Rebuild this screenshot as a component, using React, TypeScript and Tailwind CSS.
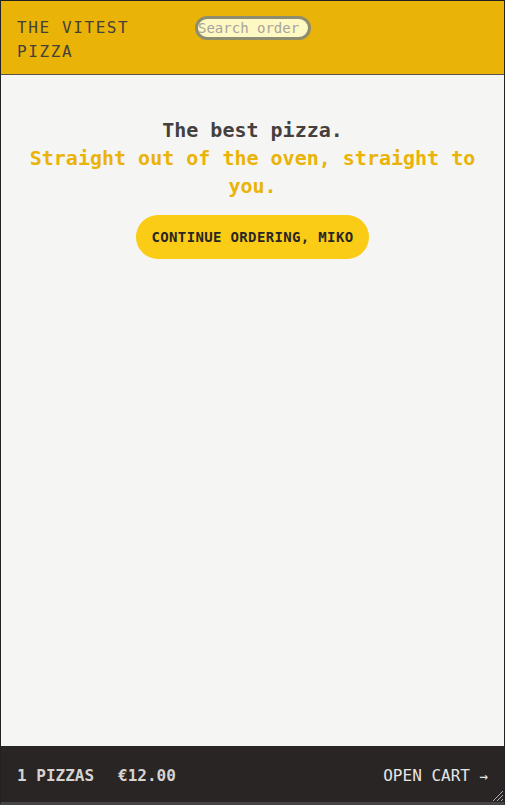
const mono = "font-['DejaVu_Sans_Mono','Liberation_Mono',monospace]";

function Header() {
  return (
    <header className="flex items-start gap-[18px] border-b border-[#57534e] bg-[#eab308] px-4 pt-[15px] pb-[10px]">
      <a href="#" className="w-40 text-base leading-6 tracking-widest text-[#44403c] uppercase">
        The Vitest Pizza
      </a>
      <form>
        <input
          placeholder="Search order #"
          className="h-6 w-[116px] rounded-full border-[3px] border-[#8f8d6f] bg-[#fef9c3] px-0 text-sm text-stone-700 placeholder:text-[#a8a29e] focus:outline-none"
        />
      </form>
    </header>
  );
}

function Home() {
  return (
    <div className="mt-[41px] px-4 text-center">
      <h1 className="mb-[15px] text-xl leading-7 font-semibold text-[#44403c]">
        The best pizza.
        <br />
        <span className="text-[#eab308]">Straight out of the oven, straight to you.</span>
      </h1>
      <button className="rounded-full bg-[#facc15] px-4 py-3 text-sm leading-5 font-semibold tracking-wide text-[#292524] uppercase">
        Continue ordering, Miko
      </button>
    </div>
  );
}

function CartOverview() {
  return (
    <footer className="flex items-center justify-between bg-[#292524] px-4 pt-[18px] pb-[14px] text-base leading-6 text-[#e7e5e4] uppercase">
      <p className="space-x-6 font-semibold text-[#d6d3d1]">
        <span>1 pizzas</span>
        <span>€12.00</span>
      </p>
      <a href="#" className="text-[#e7e5e4]">
        Open cart <span className="text-sm">&rarr;</span>
      </a>
    </footer>
  );
}

export default function App() {
  return (
    <div className={`${mono} relative flex h-[805px] flex-col overflow-hidden border border-b-[3px] border-[#222] border-b-[#454545]`}>
      <Header />
      <main className="flex-1 bg-[#f5f5f4]">
        <Home />
      </main>
      <CartOverview />
      {/* resize grip */}
      <svg className="absolute right-0 bottom-0" width="14" height="14" viewBox="0 0 14 14">
        <path d="M13 3L3 13M13 7L7 13M13 11L11 13" stroke="#aaa" strokeWidth="1" />
      </svg>
    </div>
  );
}
